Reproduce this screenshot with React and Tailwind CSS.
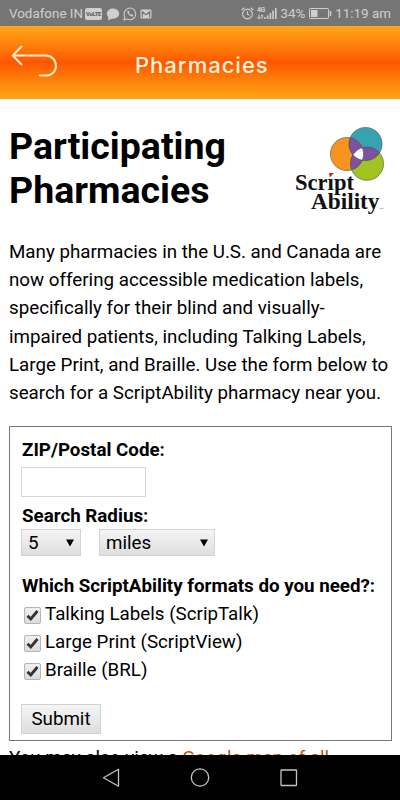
import React, { useState } from "react";

const intro = [
  "Many pharmacies in the U.S. and Canada are",
  "now offering accessible medication labels,",
  "specifically for their blind and visually-",
  "impaired patients, including Talking Labels,",
  "Large Print, and Braille. Use the form below to",
  "search for a ScriptAbility pharmacy near you.",
];

const formats = ["Talking Labels (ScripTalk)", "Large Print (ScriptView)", "Braille (BRL)"];

const StatusBar = () => (
  <div className="flex h-[26px] shrink-0 items-center bg-[#757575] pl-[9px] pr-[9px] text-[13.4px] text-[#cfcfcf]">
    <span className="w-[74px] whitespace-nowrap pt-[2px]">Vodafone IN</span>
    <span className="ml-[2px] mt-px flex h-[12px] w-[17px] items-center justify-center rounded-[2px] bg-[#cfcfcf] text-[6px] font-black tracking-[-0.4px] text-[#666]">
      VoLTE
    </span>
    <svg className="ml-[4px] mt-[2px]" width="14" height="13" viewBox="0 0 14 13" fill="#cfcfcf">
      <ellipse cx="7" cy="5.6" rx="6.2" ry="5.1" />
      <path d="M2.5 8 2 12.5 7 10z" />
    </svg>
    <svg className="ml-[3px] mt-px" width="14" height="14" viewBox="0 0 14 14" fill="none" stroke="#cfcfcf">
      <path d="M1 13l.9-3.2A5.8 5.8 0 1 1 4.2 12z" strokeWidth="1.1" />
      <path d="M4.6 4.2c-.5 2.4 2.7 5.5 5 5.1l.4-1.2-1.7-.8-.7.7C6.7 7.6 6 6.8 5.7 6l.6-.7-.7-1.5z" fill="#cfcfcf" strokeWidth=".4" />
    </svg>
    <svg className="ml-[3px] mt-px" width="12" height="10" viewBox="0 0 12 10">
      <rect x=".5" y=".5" width="11" height="9" rx="1" fill="#cfcfcf" />
      <path d="M2.3 8.5V2.8L6 5.8l3.7-3V8.5" fill="none" stroke="#757575" strokeWidth="1.2" />
    </svg>

    <div className="ml-auto flex items-center">
      <svg className="mt-[2px]" width="13" height="13" viewBox="0 0 13 13" fill="none" stroke="#cfcfcf" strokeWidth="1.1">
        <circle cx="6.5" cy="7" r="4.9" />
        <path d="M6.5 4.2V7.2l2 1.2M.6 3 3.3.8M12.4 3 9.7.8" />
      </svg>
      <svg className="ml-[3px] mt-px" width="21" height="14" viewBox="0 0 21 14">
        <text x="0" y="6" fontSize="7" fontWeight="bold" fill="#cfcfcf" letterSpacing="-.5">4G</text>
        <path d="M2 8.5v4M.6 11 2 12.8 3.4 11M5 13V9M3.8 10.3 5 8.8l1.2 1.5" fill="none" stroke="#cfcfcf" strokeWidth="1" />
        <path d="M8 13v-2M10.7 13V9.5M13.4 13V7M16.1 13V4.5M18.8 13V2" stroke="#cfcfcf" strokeWidth="1.6" />
      </svg>
      <span className="ml-[2px] pt-[2px]">34%</span>
      <svg className="ml-[4px] mt-[2px]" width="23" height="11" viewBox="0 0 23 11">
        <rect x=".5" y=".5" width="19" height="10" rx=".8" fill="none" stroke="#cfcfcf" />
        <rect x="2" y="2" width="6.5" height="7" fill="#cfcfcf" />
        <path d="M21.5 3v5" stroke="#cfcfcf" strokeWidth="1.5" />
      </svg>
      <span className="ml-[3px] whitespace-nowrap pt-[2px]">11:19 am</span>
    </div>
  </div>
);

const Logo = () => (
  <svg className="mr-[5px] shrink-0" width="96" height="92" viewBox="0 0 96 92">
    <defs>
      <clipPath id="teal"><circle cx="74.5" cy="20" r="16.6" /></clipPath>
      <clipPath id="orange"><circle cx="56" cy="30" r="16.6" /></clipPath>
      <clipPath id="green"><circle cx="76" cy="39.7" r="16.6" /></clipPath>
    </defs>
    <circle cx="74.5" cy="20" r="16.6" fill="#37a3b1" />
    <circle cx="56" cy="30" r="16.6" fill="#f79420" />
    <circle cx="76" cy="39.7" r="16.6" fill="#a1c520" />
    <g fill="#8151a1">
      <circle cx="74.5" cy="20" r="16.6" clipPath="url(#orange)" />
      <circle cx="56" cy="30" r="16.6" clipPath="url(#green)" />
      <circle cx="76" cy="39.7" r="16.6" clipPath="url(#teal)" />
    </g>
    <g clipPath="url(#teal)">
      <g clipPath="url(#orange)">
        <circle cx="76" cy="39.7" r="16.6" fill="#fff" />
      </g>
    </g>
    <g fill="none" stroke="#33404a" strokeOpacity=".75" strokeWidth=".7">
      <circle cx="74.5" cy="20" r="16.6" />
      <circle cx="56" cy="30" r="16.6" />
      <circle cx="76" cy="39.7" r="16.6" />
    </g>
    <g fontFamily="'Liberation Serif', serif" fontSize="22.5" fontWeight="bold" fill="#111">
      <text x="4" y="65.5" textLength="59" lengthAdjust="spacingAndGlyphs">Scrıpt</text>
      <text x="20" y="84.5" textLength="68.5" lengthAdjust="spacingAndGlyphs">Ability</text>
    </g>
    <text x="88.5" y="85" fontSize="2.5" fill="#555">TM</text>
    <path d="M38 49h5l-4.200 4.500z" fill="#d3202f" />
  </svg>
);

const Select = ({ value, className }) => (
  <button
    className={`flex h-[27px] items-center justify-between border border-[#d2d2d2] bg-linear-to-b from-[#f5f5f5] to-[#dedede] pl-[6px] pr-[6px] text-[18.75px] ${className}`}
  >
    <span>{value}</span>
    <svg width="8" height="8" viewBox="0 0 8 8">
      <path d="M0 .5h8L4 7.5z" />
    </svg>
  </button>
);

const App = () => {
  const [checked, setChecked] = useState([true, true, true]);
  const toggle = (i) => setChecked(checked.map((c, idx) => (idx === i ? !c : c)));

  return (
    <div className="flex h-[800px] w-[400px] flex-col overflow-hidden bg-white font-['Roboto',sans-serif] text-black">
      <StatusBar />

      <header className="flex h-[73px] shrink-0 items-center bg-linear-to-b from-[#ffa617] via-[#fc5600] to-[#ffa617] pl-[11px]">
        <svg className="mb-[4px]" width="48" height="34" viewBox="0 0 48 34" fill="none" stroke="#ffedc8" strokeWidth="2" strokeLinecap="round">
          <path d="M10.5 2.5 1.8 11.5l8.7 9M2 11.5h32.5c6 0 10.5 4.5 10.5 10.3s-4.500 9.700-9 9.700h-7" />
        </svg>
        <h1 className="ml-[76px] pt-[5px] font-['Inter',sans-serif] text-[22px] font-medium tracking-[1px] text-[#fff3dc]">
          Pharmacies
        </h1>
      </header>

      <main className="h-[656px] shrink-0 overflow-hidden pl-[9px] pr-[8px]">
        <div className="flex h-[112px] justify-between pt-[25px]">
          <h2 className="text-[37.5px] leading-[44px] font-bold">
            Participating
            <br />
            Pharmacies
          </h2>
          <Logo />
        </div>

        <div className="mt-[27px] text-[18.75px] leading-[28.2px]">
          {intro.map((line) => (
            <p key={line} className="whitespace-nowrap">{line}</p>
          ))}
        </div>

        <form className="mt-[19px] h-[315px] w-[383px] border border-[#777] pl-[11px] text-[18.75px]" onSubmit={(e) => e.preventDefault()}>
          <div className="pt-[9px] pl-px leading-[28px] font-bold">ZIP/Postal Code:</div>
          <input type="text" className="mt-[3px] block h-[30px] w-[125px] border border-[#d8d8d8]" />
          <div className="mt-[5px] pl-px leading-[28px] font-bold">Search Radius:</div>
          <div className="-mt-px flex gap-[18px]">
            <Select value="5" className="w-[60px]" />
            <Select value="miles" className="w-[116px]" />
          </div>
          <div className="mt-[16px] pl-px leading-[28px] font-bold whitespace-nowrap">Which ScriptAbility formats do you need?:</div>
          {formats.map((format, i) => (
            <div key={format} className="flex h-[28px] cursor-pointer items-center pl-[3px]" onClick={() => toggle(i)}>
              <span className="mt-[2px] flex h-[17px] w-[17px] items-center justify-center rounded-[2px] border border-[#b5b5b5] bg-linear-to-b from-[#f0f0f0] to-[#dcdcdc]">
                {checked[i] && (
                  <svg width="13" height="13" viewBox="0 0 13 13" fill="none" stroke="#333" strokeWidth="2.8">
                    <path d="M1.5 6.8 4.8 10 11.5 2" />
                  </svg>
                )}
              </span>
              <span className="ml-[4px] whitespace-nowrap">{format}</span>
            </div>
          ))}
          <button className="mt-[20px] block h-[30px] w-[80px] border border-[#d2d2d2] bg-linear-to-b from-[#f5f5f5] to-[#dedede]">
            Submit
          </button>
        </form>

        <p className="mt-[3px] text-[18.75px] leading-[28px] whitespace-nowrap">
          You may also view a <a className="text-[#c8500c]">Google map of all</a>
        </p>
      </main>

      <nav className="flex h-[45px] shrink-0 items-center bg-black pl-[102px]">
        <svg width="198" height="22" viewBox="0 0 198 22" fill="none" stroke="#c4c4c4" strokeWidth="1.3" strokeLinejoin="round">
          <path d="M16.5 2.2v17L1.5 10.7z" />
          <circle cx="98" cy="10.5" r="8.7" />
          <rect x="179" y="3" width="15.5" height="15.5" rx=".5" />
        </svg>
      </nav>
    </div>
  );
};

export default App;
